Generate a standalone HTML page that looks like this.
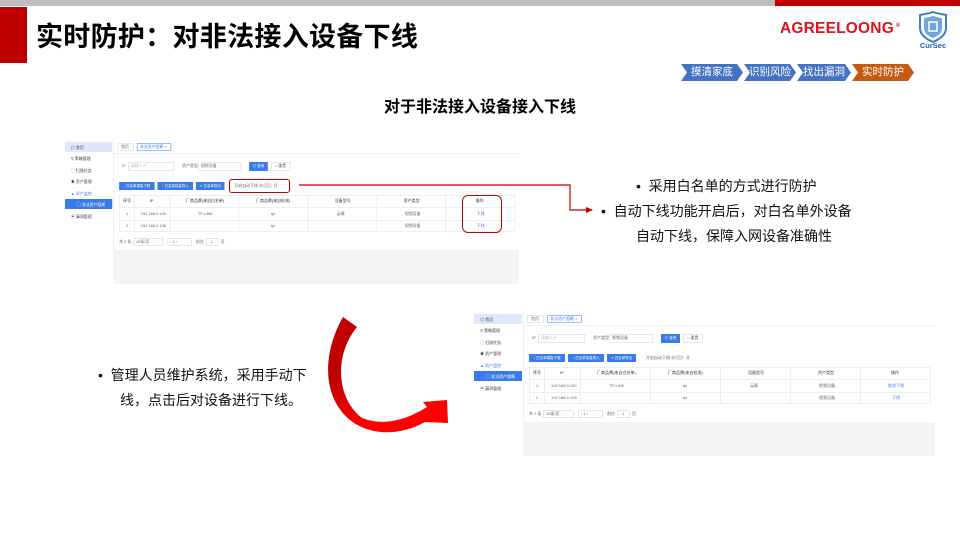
<!DOCTYPE html>
<html><head><meta charset="utf-8"><style>
*{margin:0;padding:0;box-sizing:border-box}
body{width:960px;height:540px;position:relative;background:#fff;font-family:"Liberation Sans","Noto Sans CJK SC",sans-serif;overflow:hidden}
.a{position:absolute}
.ss{position:absolute;width:470px;height:150px;transform-origin:0 0}
.ss div{position:absolute}
.t{font-size:4px;color:#666;line-height:6px;white-space:nowrap}
.sb{font-size:4px;color:#444;left:10px;white-space:nowrap}
.btn{background:#3a7bea;color:#fff;font-size:3.5px;line-height:8px;text-align:center}
.box{border:1px solid #e3e6ea;background:#fff}
.crumb{position:absolute;top:64px;height:17px;color:#fff;font-size:10.5px;line-height:17px;text-align:center;clip-path:polygon(0 0,calc(100% - 6px) 0,100% 50%,calc(100% - 6px) 100%,0 100%,6px 50%)}
.bl{font-size:14px;color:#111;white-space:nowrap;position:absolute}
</style></head><body>
<div class="a" style="left:0;top:0;width:775px;height:6px;background:#bdbdbd"></div>
<div class="a" style="left:775px;top:0;width:185px;height:6px;background:#c00000"></div>
<div class="a" style="left:0;top:7px;width:27px;height:56px;background:#c00000"></div>
<div class="a" style="left:36px;top:15px;font-size:27px;font-weight:bold;color:#000;white-space:nowrap;letter-spacing:0.3px">实时防护：对非法接入设备下线</div>
<div class="a" style="left:780px;top:20px;font-size:15.5px;font-weight:bold;color:#e0101f;letter-spacing:0.2px">AGREELOONG<sup style="font-size:6px;color:#e0101f"> ®</sup></div>
<svg class="a" style="left:918px;top:11px" width="32" height="38" viewBox="0 0 32 38"><path d="M15 1 C20 3 25 3 28 4 L28 17 C28 24 22 28 15 31 C8 28 2 24 2 17 L2 4 C5 3 10 3 15 1Z" fill="#fff" stroke="#3b7ec4" stroke-width="2"/><path d="M15 5 C19 6 22 7 24 7 L24 17 C24 22 20 25 15 27 C10 25 6 22 6 17 L6 7 C8 7 11 6 15 5Z" fill="#6fa6db"/><rect x="11" y="11" width="8" height="9" fill="none" stroke="#fff" stroke-width="1.5"/><text x="15" y="37" font-size="7.5" font-weight="bold" fill="#1b5fa8" text-anchor="middle" font-family="Liberation Sans">CurSec</text></svg>
<div class="crumb" style="left:681px;width:62px;background:#4472c4">摸清家底</div>
<div class="crumb" style="left:744px;width:52px;background:#4472c4">识别风险</div>
<div class="crumb" style="left:797px;width:54px;background:#4472c4">找出漏洞</div>
<div class="crumb" style="left:852px;width:62px;background:#c55a11">实时防护</div>
<div class="a" style="left:0;width:960px;top:93px;text-align:center;font-size:16px;font-weight:bold;color:#000">对于非法接入设备接入下线</div>

<div class="ss" style="left:61px;top:138px;transform:scale(0.985,1)">
<div style="left:4px;top:4px;width:48px;height:10px;background:#dde8fa"></div>
<div class="sb" style="top:7px">◎ 首页</div>
<div class="sb" style="top:18px">⚲ 策略管理</div>
<div class="sb" style="top:30px">◯ 扫描任务</div>
<div class="sb" style="top:41px">◉ 资产管理</div>
<div class="sb" style="top:53px;color:#3a7bea">▲ 资产监控</div>
<div style="left:4px;top:61px;width:48px;height:10px;background:#3a7bea"></div>
<div class="sb" style="top:64px;left:16px;color:#fff">▢ 非法资产阻断</div>
<div class="sb" style="top:76px">▣ 漏洞管理</div>
<div style="left:53px;top:0;width:412px;height:112px;background:#fff;border-left:1px solid #f0f0f0"></div>
<div class="box" style="left:57px;top:5px;width:17px;height:8px"></div>
<div class="t" style="left:61px;top:6px">首页</div>
<div class="box" style="left:77px;top:5px;width:35px;height:8px;border-color:#9cc0f5"></div>
<div class="t" style="left:80px;top:6px;color:#3a7bea">非法资产阻断 ×</div>
<div style="left:53px;top:15px;width:412px;height:1px;background:#eef0f3"></div>
<div class="t" style="left:62px;top:25px">IP</div>
<div class="box" style="left:68px;top:24px;width:47px;height:9px"></div>
<div class="t" style="left:71px;top:25px;color:#bbb">请输入IP</div>
<div class="t" style="left:123px;top:25px">资产类型</div>
<div class="box" style="left:139px;top:24px;width:44px;height:9px"></div>
<div class="t" style="left:142px;top:25px">视频设备</div>
<div class="btn" style="left:191px;top:24px;width:19px;height:9px">◎ 查询</div>
<div class="box" style="left:213px;top:24px;width:20px;height:9px"></div>
<div class="t" style="left:217px;top:25px">○ 重置</div>
<div class="btn" style="left:59px;top:44px;width:36px;height:8px">↓ 白名单模板下载</div>
<div class="btn" style="left:98px;top:44px;width:36px;height:8px">↑ 白名单批量导入</div>
<div class="btn" style="left:137px;top:44px;width:29px;height:8px">≺ 白名单导出</div>
<div class="t" style="left:176px;top:45px">开启自动下线 ⊗</div>
<div style="left:205px;top:45px;width:9px;height:5px;border-radius:3px;background:#dcdfe6"></div>
<div class="t" style="left:216px;top:45px">开</div>
<div class="box" style="left:59px;top:57px;width:402px;height:37px;border-color:#eceef1"></div>
<div style="left:59px;top:69px;width:402px;height:1px;background:#eceef1"></div>
<div style="left:59px;top:82px;width:402px;height:1px;background:#eceef1"></div>
<div style="left:74px;top:57px;width:1px;height:37px;background:#eceef1"></div>
<div style="left:110px;top:57px;width:1px;height:37px;background:#eceef1"></div>
<div style="left:180px;top:57px;width:1px;height:37px;background:#eceef1"></div>
<div style="left:250px;top:57px;width:1px;height:37px;background:#eceef1"></div>
<div style="left:320px;top:57px;width:1px;height:37px;background:#eceef1"></div>
<div style="left:390px;top:57px;width:1px;height:37px;background:#eceef1"></div>
<div class="t" style="left:63px;top:60px;color:#333">序号</div>
<div class="t" style="left:90px;top:60px;color:#333">IP</div>
<div class="t" style="left:127px;top:60px;color:#333">厂商品牌(来自白名单)</div>
<div class="t" style="left:198px;top:60px;color:#333">厂商品牌(来自检测)</div>
<div class="t" style="left:278px;top:60px;color:#333">设备型号</div>
<div class="t" style="left:348px;top:60px;color:#333">资产类型</div>
<div class="t" style="left:421px;top:60px;color:#333">操作</div>
<div class="t" style="left:66px;top:73px">1</div>
<div class="t" style="left:81px;top:73px">192.168.0.100</div>
<div class="t" style="left:139px;top:73px">TP-LINK</div>
<div class="t" style="left:213px;top:73px">tpl</div>
<div class="t" style="left:280px;top:73px">云摩</div>
<div class="t" style="left:349px;top:73px">视频设备</div>
<div class="t" style="left:422px;top:73px;color:#3a7bea">下线</div>
<div class="t" style="left:66px;top:85px">2</div>
<div class="t" style="left:81px;top:85px">192.168.0.108</div>
<div class="t" style="left:213px;top:85px">tpl</div>
<div class="t" style="left:349px;top:85px">视频设备</div>
<div class="t" style="left:422px;top:85px;color:#3a7bea">下线</div>
<div class="t" style="left:59px;top:101px">共 2 条</div>
<div class="box" style="left:73px;top:100px;width:31px;height:8px"></div>
<div class="t" style="left:76px;top:101px">10条/页</div>
<div class="box" style="left:108px;top:100px;width:25px;height:8px"></div>
<div class="t" style="left:111px;top:101px">‹ <span style="color:#3a7bea">1</span> ›</div>
<div class="t" style="left:137px;top:101px">前往</div>
<div class="box" style="left:147px;top:100px;width:13px;height:8px"></div>
<div class="t" style="left:152px;top:101px">1</div>
<div class="t" style="left:162px;top:101px">页</div>
<div style="left:53px;top:112px;width:412px;height:34px;background:#f3f4f6"></div>
</div>

<div class="ss" style="left:470px;top:310px">
<div style="left:4px;top:4px;width:48px;height:10px;background:#dde8fa"></div>
<div class="sb" style="top:7px">◎ 首页</div>
<div class="sb" style="top:18px">⚲ 策略管理</div>
<div class="sb" style="top:30px">◯ 扫描任务</div>
<div class="sb" style="top:41px">◉ 资产管理</div>
<div class="sb" style="top:53px;color:#3a7bea">▲ 资产监控</div>
<div style="left:4px;top:61px;width:48px;height:10px;background:#3a7bea"></div>
<div class="sb" style="top:64px;left:16px;color:#fff">▢ 非法资产阻断</div>
<div class="sb" style="top:76px">▣ 漏洞管理</div>
<div style="left:53px;top:0;width:412px;height:112px;background:#fff;border-left:1px solid #f0f0f0"></div>
<div class="box" style="left:57px;top:5px;width:17px;height:8px"></div>
<div class="t" style="left:61px;top:6px">首页</div>
<div class="box" style="left:77px;top:5px;width:35px;height:8px;border-color:#9cc0f5"></div>
<div class="t" style="left:80px;top:6px;color:#3a7bea">非法资产阻断 ×</div>
<div style="left:53px;top:15px;width:412px;height:1px;background:#eef0f3"></div>
<div class="t" style="left:62px;top:25px">IP</div>
<div class="box" style="left:68px;top:24px;width:47px;height:9px"></div>
<div class="t" style="left:71px;top:25px;color:#bbb">请输入IP</div>
<div class="t" style="left:123px;top:25px">资产类型</div>
<div class="box" style="left:139px;top:24px;width:44px;height:9px"></div>
<div class="t" style="left:142px;top:25px">视频设备</div>
<div class="btn" style="left:191px;top:24px;width:19px;height:9px">◎ 查询</div>
<div class="box" style="left:213px;top:24px;width:20px;height:9px"></div>
<div class="t" style="left:217px;top:25px">○ 重置</div>
<div class="btn" style="left:59px;top:44px;width:36px;height:8px">↓ 白名单模板下载</div>
<div class="btn" style="left:98px;top:44px;width:36px;height:8px">↑ 白名单批量导入</div>
<div class="btn" style="left:137px;top:44px;width:29px;height:8px">≺ 白名单导出</div>
<div class="t" style="left:176px;top:45px">开启自动下线 ⊗</div>
<div style="left:205px;top:45px;width:9px;height:5px;border-radius:3px;background:#dcdfe6"></div>
<div class="t" style="left:216px;top:45px">开</div>
<div class="box" style="left:59px;top:57px;width:402px;height:37px;border-color:#eceef1"></div>
<div style="left:59px;top:69px;width:402px;height:1px;background:#eceef1"></div>
<div style="left:59px;top:82px;width:402px;height:1px;background:#eceef1"></div>
<div style="left:74px;top:57px;width:1px;height:37px;background:#eceef1"></div>
<div style="left:110px;top:57px;width:1px;height:37px;background:#eceef1"></div>
<div style="left:180px;top:57px;width:1px;height:37px;background:#eceef1"></div>
<div style="left:250px;top:57px;width:1px;height:37px;background:#eceef1"></div>
<div style="left:320px;top:57px;width:1px;height:37px;background:#eceef1"></div>
<div style="left:390px;top:57px;width:1px;height:37px;background:#eceef1"></div>
<div class="t" style="left:63px;top:60px;color:#333">序号</div>
<div class="t" style="left:90px;top:60px;color:#333">IP</div>
<div class="t" style="left:127px;top:60px;color:#333">厂商品牌(来自白名单)</div>
<div class="t" style="left:198px;top:60px;color:#333">厂商品牌(来自检测)</div>
<div class="t" style="left:278px;top:60px;color:#333">设备型号</div>
<div class="t" style="left:348px;top:60px;color:#333">资产类型</div>
<div class="t" style="left:421px;top:60px;color:#333">操作</div>
<div class="t" style="left:66px;top:73px">1</div>
<div class="t" style="left:81px;top:73px">192.168.0.100</div>
<div class="t" style="left:139px;top:73px">TP-LINK</div>
<div class="t" style="left:213px;top:73px">tpl</div>
<div class="t" style="left:280px;top:73px">云摩</div>
<div class="t" style="left:349px;top:73px">视频设备</div>
<div class="t" style="left:418px;top:73px;color:#3a7bea">取消下线</div>
<div class="t" style="left:66px;top:85px">2</div>
<div class="t" style="left:81px;top:85px">192.168.0.108</div>
<div class="t" style="left:213px;top:85px">tpl</div>
<div class="t" style="left:349px;top:85px">视频设备</div>
<div class="t" style="left:422px;top:85px;color:#3a7bea">下线</div>
<div class="t" style="left:59px;top:101px">共 2 条</div>
<div class="box" style="left:73px;top:100px;width:31px;height:8px"></div>
<div class="t" style="left:76px;top:101px">10条/页</div>
<div class="box" style="left:108px;top:100px;width:25px;height:8px"></div>
<div class="t" style="left:111px;top:101px">‹ <span style="color:#3a7bea">1</span> ›</div>
<div class="t" style="left:137px;top:101px">前往</div>
<div class="box" style="left:147px;top:100px;width:13px;height:8px"></div>
<div class="t" style="left:152px;top:101px">1</div>
<div class="t" style="left:162px;top:101px">页</div>
<div style="left:53px;top:112px;width:412px;height:34px;background:#f3f4f6"></div>
</div>

<div class="a" style="left:229px;top:179px;width:61px;height:14px;border:1px solid #c00000;border-radius:3px"></div>
<div class="a" style="left:462px;top:195px;width:40px;height:38px;border:1px solid #c00000;border-radius:6px"></div>
<svg class="a" style="left:0;top:0" width="960" height="540">
<polyline points="299,185 570,185 570,210 588,210" fill="none" stroke="#c00000" stroke-width="1.2"/>
<polygon points="586,207 593,210 586,213" fill="#c00000"/>
<defs><linearGradient id="g" x1="0" y1="0" x2="1" y2="1"><stop offset="0.3" stop-color="#c00000"/><stop offset="0.6" stop-color="#ff0000"/></linearGradient></defs>
<path d="M343,317 C324,350 320,395 350,420 C370,436 400,436 425,422 L448,423 L447,400 L423,402 L427,407 C405,421 382,426 362,418 C336,398 334,355 357,327 Z" fill="url(#g)"/>
</svg>

<div class="bl" style="left:636px;top:176px">•&nbsp;&nbsp;采用白名单的方式进行防护</div>
<div class="bl" style="left:601px;top:201px">•&nbsp;&nbsp;自动下线功能开启后，对白名单外设备</div>
<div class="bl" style="left:636px;top:226px">自动下线，保障入网设备准确性</div>
<div class="bl" style="left:98px;top:365px">•&nbsp;&nbsp;管理人员维护系统，采用手动下</div>
<div class="bl" style="left:120px;top:390px">线，点击后对设备进行下线。</div>
</body></html>
